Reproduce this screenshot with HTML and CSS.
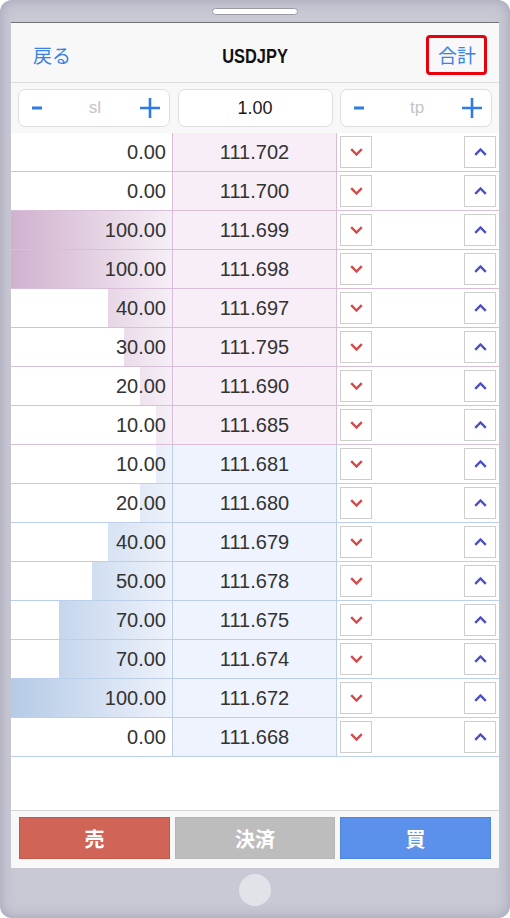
FILE: index.html
```html
<!DOCTYPE html>
<html lang="ja">
<head>
    <meta charset="UTF-8">
    <meta name="viewport" content="width=device-width, initial-scale=1.0">
    <title>USDJPY</title>
    <link rel="stylesheet" href="styles.css">
</head>
<body>
    <div class="device">
        <div class="device-top"><span class="speaker"></span></div>

        <div class="screen">
            <div class="nav">
                <a class="nav-back">戻る</a>
                <span class="nav-title"><span class="nav-title-text">USDJPY</span></span>
                <a class="nav-total">合計</a>
            </div>

            <div class="controls">
                <div class="stepper">
                    <svg class="minus" width="10" height="4" viewBox="0 0 10 4"><rect width="10" height="3" y="0.5" fill="#2f7be6"/></svg>
                    <span class="stepper-label">sl</span>
                    <svg class="plus" width="20" height="20" viewBox="0 0 20 20"><path d="M10 0v20M0 10h20" stroke="#2f7be6" stroke-width="2.6"/></svg>
                </div>
                <div class="lot">1.00</div>
                <div class="stepper">
                    <svg class="minus" width="10" height="4" viewBox="0 0 10 4"><rect width="10" height="3" y="0.5" fill="#2f7be6"/></svg>
                    <span class="stepper-label">tp</span>
                    <svg class="plus" width="20" height="20" viewBox="0 0 20 20"><path d="M10 0v20M0 10h20" stroke="#2f7be6" stroke-width="2.6"/></svg>
                </div>
            </div>

            <div class="book" id="book"></div>

            <div class="spacer"></div>

            <div class="actions">
                <button class="btn btn-sell">売</button>
                <button class="btn btn-close">決済</button>
                <button class="btn btn-buy">買</button>
            </div>
        </div>

        <div class="device-bottom"><span class="home"></span></div>
    </div>

    <script>
        // Order book levels: ask side first, then bid side
        const levels = [
            { side: 'ask', amount: 0, price: '111.702' },
            { side: 'ask', amount: 0, price: '111.700' },
            { side: 'ask', amount: 100, price: '111.699' },
            { side: 'ask', amount: 100, price: '111.698' },
            { side: 'ask', amount: 40, price: '111.697' },
            { side: 'ask', amount: 30, price: '111.795' },
            { side: 'ask', amount: 20, price: '111.690' },
            { side: 'ask', amount: 10, price: '111.685' },
            { side: 'bid', amount: 10, price: '111.681' },
            { side: 'bid', amount: 20, price: '111.680' },
            { side: 'bid', amount: 40, price: '111.679' },
            { side: 'bid', amount: 50, price: '111.678' },
            { side: 'bid', amount: 70, price: '111.675' },
            { side: 'bid', amount: 70, price: '111.674' },
            { side: 'bid', amount: 100, price: '111.672' },
            { side: 'bid', amount: 0, price: '111.668' }
        ];

        const down = '<svg width="13" height="8" viewBox="0 0 13 8"><path d="M1.2 1.2l5.3 5.3 5.3-5.3" fill="none" stroke="#d24a4a" stroke-width="2.4"/></svg>';
        const up = '<svg width="13" height="8" viewBox="0 0 13 8"><path d="M1.2 6.8l5.3-5.3 5.3 5.3" fill="none" stroke="#4d4fc4" stroke-width="2.4"/></svg>';

        const book = document.getElementById('book');
        levels.forEach(function(level) {
            const row = document.createElement('div');
            row.className = 'row row-' + level.side;
            row.innerHTML =
                '<div class="amount">' +
                    '<span class="bar" style="width:' + level.amount + '%"></span>' +
                    '<span class="amount-text">' + level.amount.toFixed(2) + '</span>' +
                '</div>' +
                '<div class="price">' + level.price + '</div>' +
                '<div class="arrows">' +
                    '<span class="arrow">' + down + '</span>' +
                    '<span class="arrow">' + up + '</span>' +
                '</div>';
            book.appendChild(row);
        });
    </script>
</body>
</html>
```

FILE: styles.css
```css
body {
    margin: 0;
    background: #fff;
    font-family: "Liberation Sans", Arial, "Noto Sans CJK JP", sans-serif;
}
.device {
    width: 510px;
    height: 918px;
    border-radius: 12px;
    background: #c9c9d5;
    box-shadow: inset 0 0 14px rgba(110, 110, 140, 0.45);
    display: flex;
    flex-direction: column;
    align-items: center;
    overflow: hidden;
}
.device-top {
    height: 22px;
    width: 100%;
    display: flex;
    justify-content: center;
    align-items: flex-start;
}
.speaker {
    margin-top: 8px;
    width: 84px;
    height: 5px;
    background: #fff;
    border: 1px solid #9a9aa6;
    border-radius: 4px;
}
.screen {
    width: 488px;
    height: 846px;
    box-sizing: border-box;
    border-top: 1px solid #737373;
    background: #fff;
    display: flex;
    flex-direction: column;
}
.nav {
    height: 55px;
    background: #f8f8f8;
    border-bottom: 1px solid #dcdcdc;
    display: flex;
    align-items: center;
    justify-content: space-between;
    padding: 4px 12px 0 22px;
    position: relative;
}
.nav-back {
    color: #3b82e4;
    font-family: "Noto Sans CJK JP", sans-serif;
    font-size: 19px;
}
.nav-title {
    position: absolute;
    left: 0;
    right: 0;
    top: 8px;
    bottom: 0;
    display: flex;
    align-items: center;
    justify-content: center;
    pointer-events: none;
}
.nav-title-text {
    display: inline-block;
    font-weight: bold;
    font-size: 20px;
    color: #111;
    transform: scaleX(0.82);
}
.nav-total {
    color: #3b82e4;
    font-family: "Noto Sans CJK JP", sans-serif;
    font-size: 19px;
    line-height: 1;
    padding: 7px 8px 8px 9px;
    border: 3px solid #e8000c;
    border-radius: 4px;
}
.controls {
    height: 50px;
    background: #f8f8f8;
    box-sizing: border-box;
    padding: 6px 7px 6px;
    display: grid;
    grid-template-columns: 152px 155px 152px;
    justify-content: space-between;
}
.stepper, .lot {
    background: #fff;
    border: 1px solid #dedede;
    border-radius: 7px;
    box-sizing: border-box;
}
.stepper {
    display: flex;
    align-items: center;
    justify-content: space-between;
    padding: 0 9px 0 13px;
}
.stepper-label {
    color: #c4c4c4;
    font-size: 17px;
    padding-left: 8px;
}
.lot {
    display: flex;
    align-items: center;
    justify-content: center;
    font-size: 18px;
    color: #1a1a1a;
}
.book {
    display: flex;
    flex-direction: column;
}
.row {
    height: 39px;
    box-sizing: border-box;
    display: grid;
    grid-template-columns: 161px 165px 162px;
    border-bottom: 1px solid;
    font-size: 20px;
    color: #333;
}
.row-ask {
    border-color: #d8bed8;
}
.row-bid {
    border-color: #bccfea;
}
.amount {
    position: relative;
    display: flex;
    align-items: center;
    justify-content: flex-end;
    padding-right: 6px;
}
.bar {
    position: absolute;
    right: 0;
    top: 0;
    bottom: 0;
    background-size: 161px 100%;
    background-position: right top;
    background-repeat: no-repeat;
}
.row-ask .bar {
    background-image: linear-gradient(to right, #d0b1ce, #f6eff6);
}
.row-bid .bar {
    background-image: linear-gradient(to right, #b4cae6, #edf2fb);
}
.amount-text {
    position: relative;
}
.price {
    display: flex;
    align-items: center;
    justify-content: center;
    border-left: 1px solid;
    border-right: 1px solid;
}
.row-ask .price {
    background: #f7eef7;
    border-color: #d8bed8;
}
.row-bid .price {
    background: #eef3fd;
    border-color: #bccfea;
}
.arrows {
    display: flex;
    align-items: center;
    justify-content: space-between;
    padding: 0 3px;
}
.arrow {
    width: 32px;
    height: 32px;
    box-sizing: border-box;
    border: 1px solid #cdcdcd;
    display: flex;
    align-items: center;
    justify-content: center;
    background: #fff;
}
.spacer {
    flex: 1;
}
.actions {
    height: 58px;
    box-sizing: border-box;
    border-top: 1px solid #d4d4d4;
    background: #f8f8f8;
    display: grid;
    grid-template-columns: 151px 160px 151px;
    justify-content: space-between;
    padding: 6px 8px 0;
}
.btn {
    height: 42px;
    border: 1px solid;
    color: #fff;
    font-family: "Noto Sans CJK JP", sans-serif;
    font-weight: bold;
    font-size: 20px;
    padding: 0;
}
.btn-sell {
    background: #d06557;
    border-color: #c2574a;
}
.btn-close {
    background: #bdbdbd;
    border-color: #b5b5b5;
}
.btn-buy {
    background: #5c91eb;
    border-color: #4e84e2;
}
.device-bottom {
    flex: 1;
    display: flex;
    align-items: center;
    justify-content: center;
}
.home {
    width: 32px;
    height: 32px;
    border-radius: 50%;
    background: #e2e2e9;
    margin-bottom: 6px;
}
```
